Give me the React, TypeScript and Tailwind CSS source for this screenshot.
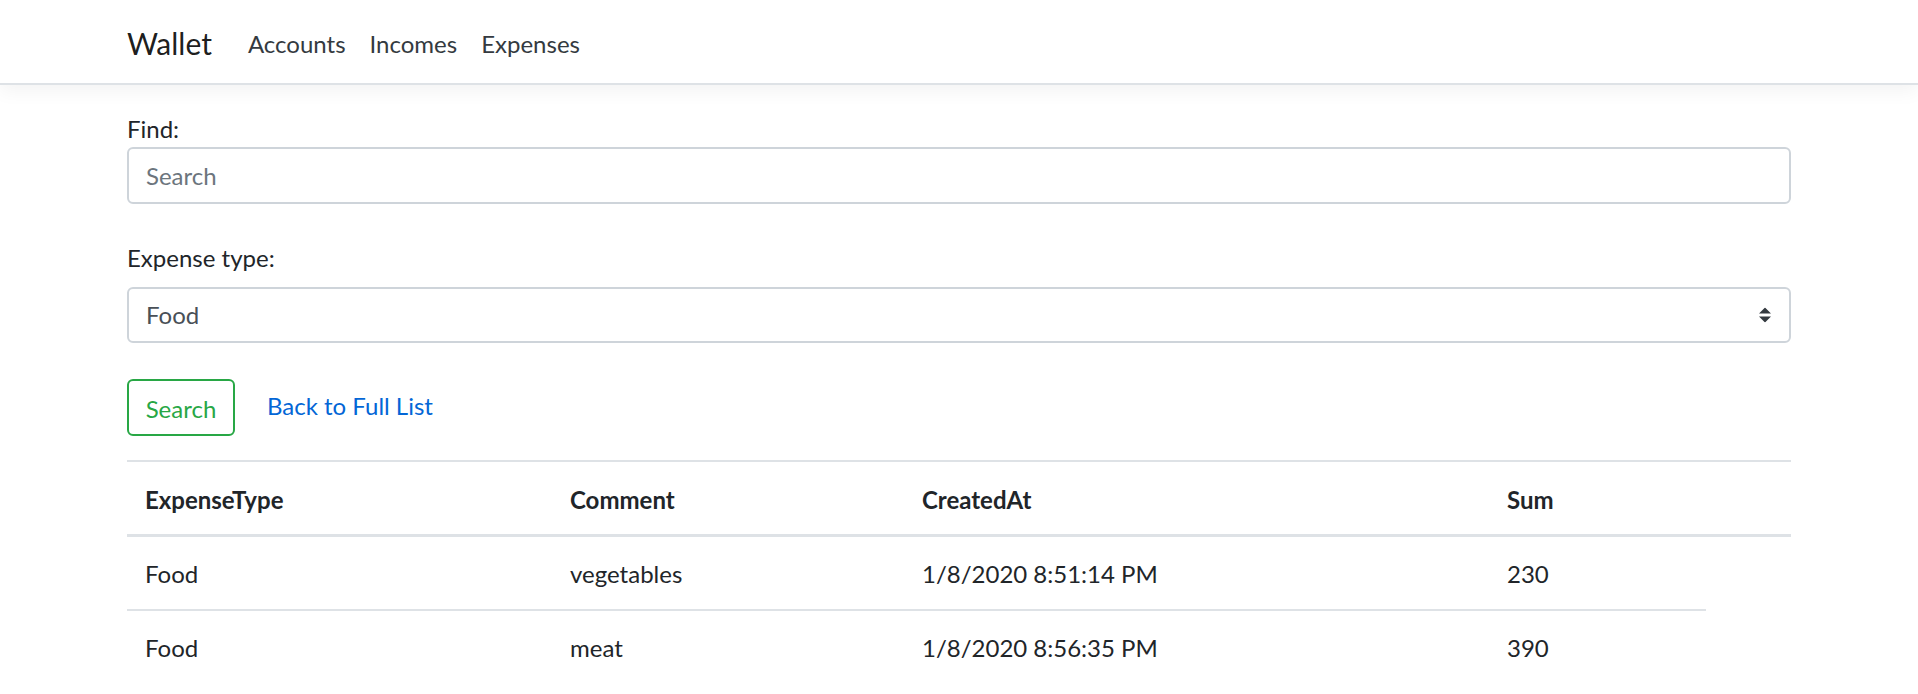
import React from 'react';

const rows = [
  { type: 'Food', comment: 'vegetables', createdAt: '1/8/2020 8:51:14 PM', sum: '230' },
  { type: 'Food', comment: 'meat', createdAt: '1/8/2020 8:56:35 PM', sum: '390' },
];

const App: React.FC = () => {
  return (
    <div className="min-h-screen bg-white font-['Lato',sans-serif] text-[24px] leading-[36px] text-[#212529]">
      {/* Navbar */}
      <header className="h-[85px] bg-white border-b-2 border-[#dee2e6] shadow-[0_6px_18px_rgba(0,0,0,0.05)]">
        <nav className="mx-auto flex h-[83px] w-[1664px] items-center pt-[4px]">
          <a className="mr-[24px] text-[30px] leading-[45px] text-black/90">Wallet</a>
          <a className="px-[12px] text-[#343a40]">Accounts</a>
          <a className="px-[12px] text-[#343a40]">Incomes</a>
          <a className="px-[12px] text-[#343a40]">Expenses</a>
        </nav>
      </header>

      <main className="mx-auto w-[1664px] pt-[26px]">
        <form>
          <label className="block">Find:</label>
          <input
            type="text"
            placeholder="Search"
            className="block h-[57px] w-full rounded-[6px] border-2 border-[#ced4da] px-[17px] text-[#495057] placeholder:text-[#6c757d] outline-none"
          />

          <label className="mt-[36px] mb-[11px] block">Expense type:</label>
          <div className="relative">
            <select className="block h-[56px] w-full appearance-none rounded-[6px] border-2 border-[#ced4da] bg-white px-[17px] text-[#495057] outline-none">
              <option>Food</option>
            </select>
            <svg
              className="pointer-events-none absolute right-[20px] top-1/2 -translate-y-1/2"
              width="12"
              height="15"
              viewBox="0 0 4 5"
            >
              <path fill="#343a40" d="M2 0L0 2h4zm0 5L0 3h4z" />
            </svg>
          </div>

          <div className="mt-[36px] flex items-center gap-[32px]">
            <button
              type="button"
              className="h-[57px] w-[108px] rounded-[6px] border-2 border-[#28a745] pt-[2px] text-[#28a745]"
            >
              Search
            </button>
            <a className="mb-[3px] text-[#0366d6]">Back to Full List</a>
          </div>
        </form>

        {/* Results */}
        <table className="mt-[24px] w-full table-fixed">
          <thead>
            <tr className="border-t-2 border-[#dee2e6]">
              <th className="w-[425px] border-b-[3px] border-[#dee2e6] px-[18px] pt-[20px] pb-[16px] text-left font-bold">ExpenseType</th>
              <th className="w-[352px] border-b-[3px] border-[#dee2e6] px-[18px] pt-[20px] pb-[16px] text-left font-bold">Comment</th>
              <th className="w-[585px] border-b-[3px] border-[#dee2e6] px-[18px] pt-[20px] pb-[16px] text-left font-bold">CreatedAt</th>
              <th className="w-[217px] border-b-[3px] border-[#dee2e6] px-[18px] pt-[20px] pb-[16px] text-left font-bold">Sum</th>
              <th className="w-[85px] border-b-[3px] border-[#dee2e6]"></th>
            </tr>
          </thead>
          <tbody>
            {rows.map((r, i) => (
              <tr key={i}>
                <td className={`px-[18px] pt-[19px] pb-[17px] ${i > 0 ? 'border-t-2 border-[#dee2e6]' : ''}`}>{r.type}</td>
                <td className={`px-[18px] pt-[19px] pb-[17px] ${i > 0 ? 'border-t-2 border-[#dee2e6]' : ''}`}>{r.comment}</td>
                <td className={`px-[18px] pt-[19px] pb-[17px] ${i > 0 ? 'border-t-2 border-[#dee2e6]' : ''}`}>{r.createdAt}</td>
                <td className={`px-[18px] pt-[19px] pb-[17px] ${i > 0 ? 'border-t-2 border-[#dee2e6]' : ''}`}>{r.sum}</td>
              </tr>
            ))}
          </tbody>
        </table>
      </main>
    </div>
  );
};

export default App;
